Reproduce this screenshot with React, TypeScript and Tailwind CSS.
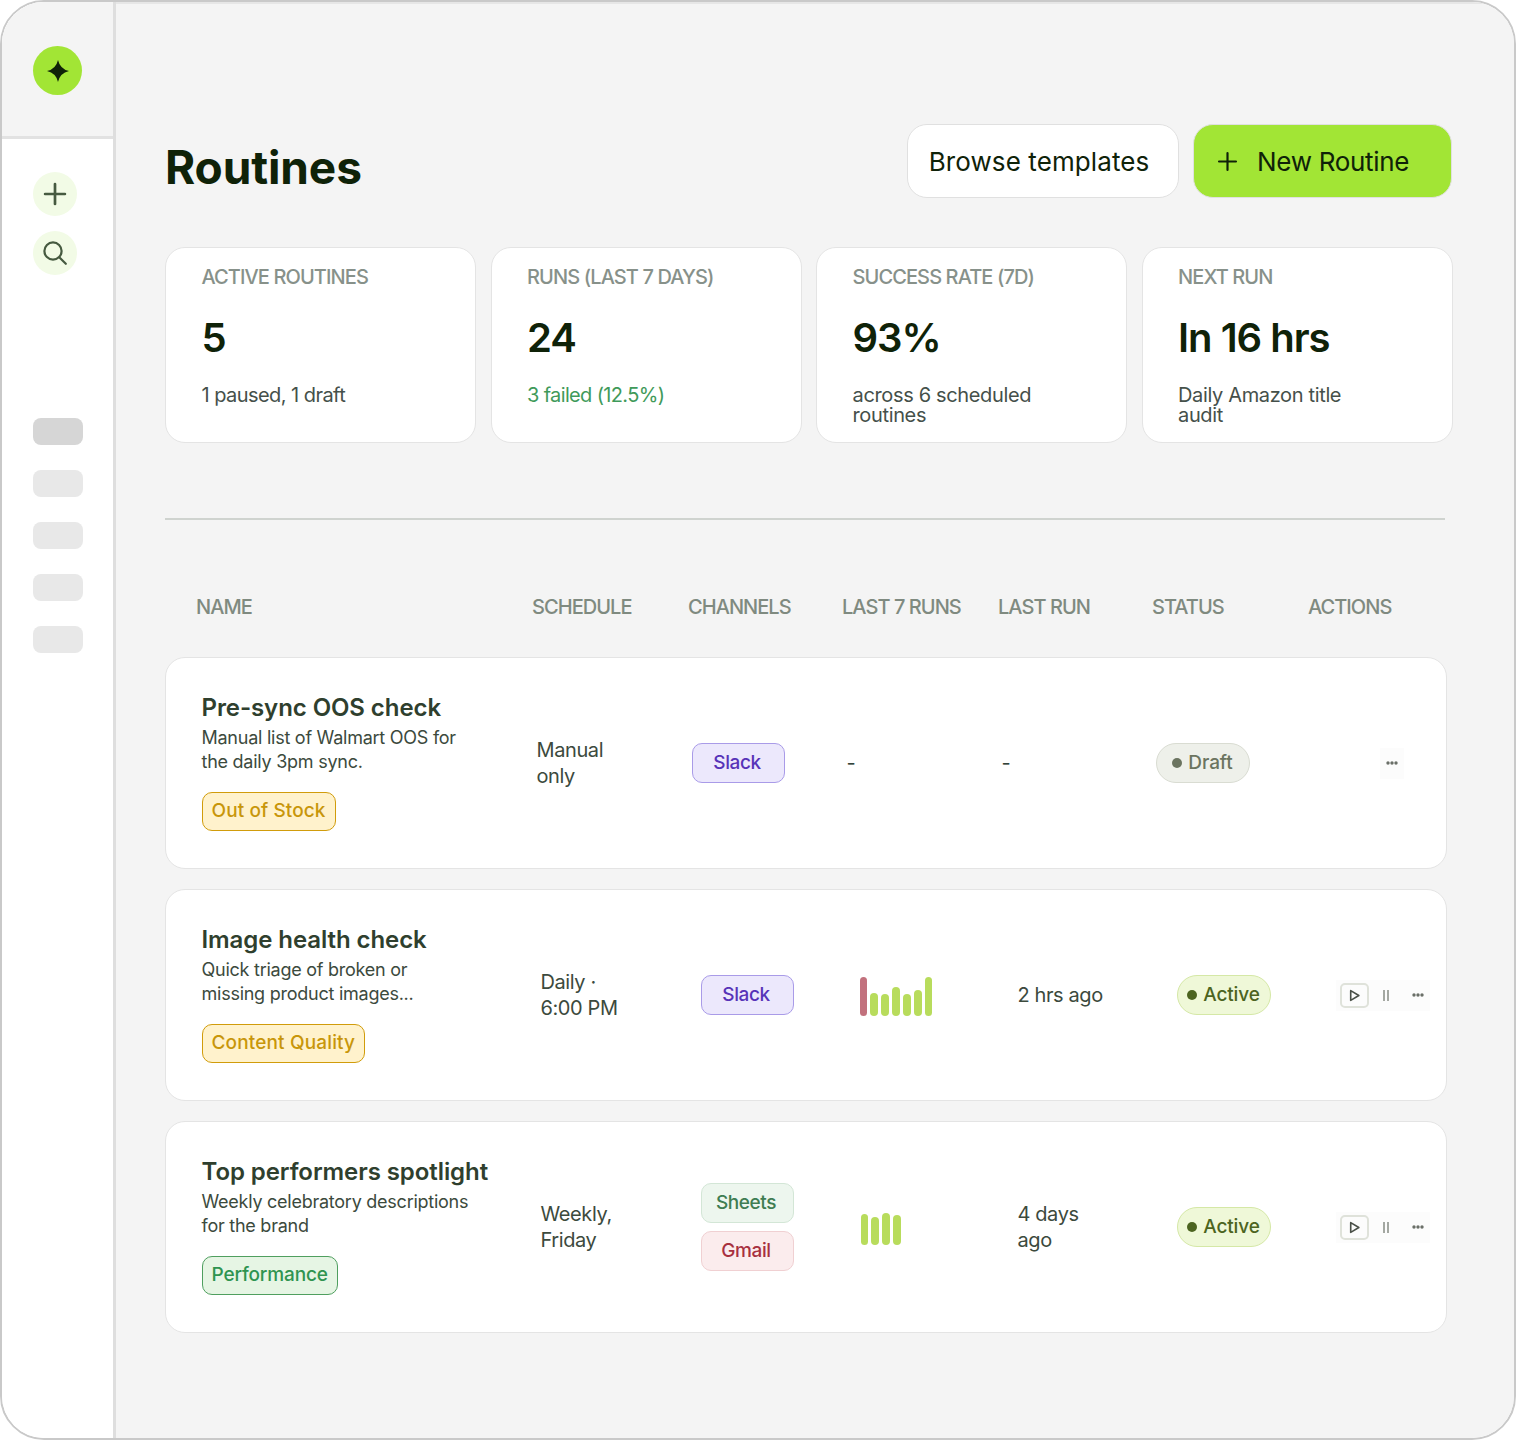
import { Plus } from 'lucide-react';

const FONT = "font-['Inter','Noto_Sans',sans-serif]";

const stats = [
  { label: 'ACTIVE ROUTINES', value: '5', sub: '1 paused, 1 draft', subClass: 'tracking-[-0.55px] text-[#45504a]' },
  { label: 'RUNS (LAST 7 DAYS)', value: '24', sub: '3 failed (12.5%)', subClass: 'tracking-[-0.65px] text-[#3f9a5a]' },
  { label: 'SUCCESS RATE (7D)', value: '93%', sub: 'across 6 scheduled routines', subClass: 'tracking-[-0.35px] text-[#45504a]' },
  { label: 'NEXT RUN', value: 'In 16 hrs', sub: 'Daily Amazon title audit', subClass: 'tracking-[-0.35px] text-[#45504a]' },
];

const headers = [
  { label: 'NAME', w: 'w-[336px]' },
  { label: 'SCHEDULE', w: 'w-[156px]' },
  { label: 'CHANNELS', w: 'w-[154px]' },
  { label: 'LAST 7 RUNS', w: 'w-[156px]' },
  { label: 'LAST RUN', w: 'w-[154px]' },
  { label: 'STATUS', w: 'w-[156px]' },
  { label: 'ACTIONS', w: 'w-[100px]' },
];

function Chip({ label, className }: { label: string; className: string }) {
  return (
    <span className={`flex h-10 w-[93px] items-center justify-center rounded-[10px] border pr-[2px] text-[19px] font-medium tracking-[-0.4px] ${className}`}>
      {label}
    </span>
  );
}

function StatusPill({ label, active }: { label: string; active: boolean }) {
  return (
    <span
      className={`flex h-10 w-[94px] items-center justify-center gap-[6px] rounded-full border text-[19px] font-medium tracking-[-0.1px] ${
        active ? 'border-[#d5e8a6] bg-[#eff8d8] text-[#4c6420]' : 'border-[#d9dcd2] bg-[#eef0ea] text-[#6b7460]'
      }`}
    >
      <span className={`size-[10px] rounded-full ${active ? 'bg-[#4c6420]' : 'bg-[#6b7460]'}`} />
      {label}
    </span>
  );
}

function Dots() {
  return (
    <svg width="12" height="4" viewBox="0 0 12 4" fill="#6a6f68">
      <circle cx="2" cy="2" r="1.7" />
      <circle cx="6" cy="2" r="1.7" />
      <circle cx="10" cy="2" r="1.7" />
    </svg>
  );
}

function Actions() {
  return (
    <div className="flex h-[31px] w-[94px] items-center bg-[#fcfcfc] pl-1">
      <span className="flex h-[25px] w-[29px] items-center justify-center rounded-[5px] border-2 border-[#dfe2da]">
        <svg width="13" height="13" viewBox="0 0 12 12" fill="none" stroke="#4a5048" strokeWidth="1.5" strokeLinejoin="round">
          <path d="M2.5 1.5 10 6l-7.5 4.500z" />
        </svg>
      </span>
      <span className="ml-[14px] flex w-[6px] justify-between">
        <span className="h-[11px] w-[2px] bg-[#a4a8a2]" />
        <span className="h-[11px] w-[2px] bg-[#a4a8a2]" />
      </span>
      <span className="ml-[23px] flex"><Dots /></span>
    </div>
  );
}

function Bars({ values, failedFirst, className }: { values: number[]; failedFirst?: boolean; className: string }) {
  return (
    <div className={`flex items-end gap-[3.3px] ${className}`}>
      {values.map((h, i) => (
        <span
          key={i}
          className={`w-[7.6px] rounded-full ${failedFirst && i === 0 ? 'bg-[#c2717d]' : 'bg-[#b8dc5c]'}`}
          style={{ height: h }}
        />
      ))}
    </div>
  );
}

function RoutineRow({
  title,
  desc,
  tag,
  tagClass,
  schedule,
  cols,
  children,
}: {
  title: string;
  desc: string;
  tag: string;
  tagClass: string;
  schedule: string;
  cols: string;
  children: React.ReactNode;
}) {
  return (
    <div className={`grid h-[212px] items-center rounded-[20px] border-[1.5px] border-[#e4e4e4] bg-white pl-[35.5px] text-[#33433a] ${cols}`}>
      <div className="mb-[2px]">
        <div className="text-[24px] leading-[30px] font-semibold tracking-[-0.08px] text-[#2f3f2e]">{title}</div>
        <div className="mt-[3px] w-[268px] text-[18px] leading-[24px] tracking-[-0.25px] text-[#3c4a3d]">{desc}</div>
        <span className={`mt-[18px] inline-flex h-[39px] items-center rounded-[10px] border px-[9px] text-[19px] font-medium ${tagClass}`}>
          {tag}
        </span>
      </div>
      <div className="w-[90px] text-[20px] leading-[26px] tracking-[-0.4px] text-[#3c4a3d]">{schedule}</div>
      {children}
    </div>
  );
}

export default function App() {
  return (
    <div className={`${FONT} h-[1440px] w-[1516px] bg-white`}>
      <div className="flex h-full overflow-hidden rounded-[44px] border-2 border-[#c9c9c9]">
        <aside className="flex w-[114px] shrink-0 flex-col border-r-[3px] border-[#dedede] bg-white">
          <div className="flex h-[137px] shrink-0 border-b-[3px] border-[#e2e2e2] bg-[#f4f4f4] pt-[44px] pl-[31px]">
            <div className="flex size-[49px] items-center justify-center rounded-full bg-[#a2e535]">
              <svg width="22" height="22" viewBox="0 0 22 22" fill="#0f2208">
                <path d="M11 0Q13 9 22 11 13 13 11 22 9 13 0 11 9 9 11 0z" />
              </svg>
            </div>
          </div>
          <div className="flex flex-col gap-[15px] pt-[33px] pl-[31px]">
            <div className="flex size-[44px] items-center justify-center rounded-full bg-[#f2fbe6] text-[#465a40]">
              <Plus size={34} strokeWidth={1.9} />
            </div>
            <div className="flex size-[44px] items-center justify-center rounded-full bg-[#f2fbe6] text-[#465a40]">
              <svg width="24" height="24" viewBox="0 0 24 24" fill="none" stroke="currentColor" strokeWidth="2.2" strokeLinecap="round">
                <circle cx="10" cy="10" r="8.600" />
                <path d="M16.500 16.500 22.800 22.800" />
              </svg>
            </div>
          </div>
          <div className="flex flex-col gap-[25px] pt-[143px] pl-[31px]">
            <div className="h-[27px] w-[50px] rounded-[8px] bg-[#d6d6d6]" />
            <div className="h-[27px] w-[50px] rounded-[8px] bg-[#e8e8e8]" />
            <div className="h-[27px] w-[50px] rounded-[8px] bg-[#e8e8e8]" />
            <div className="h-[27px] w-[50px] rounded-[8px] bg-[#e8e8e8]" />
            <div className="h-[27px] w-[50px] rounded-[8px] bg-[#e8e8e8]" />
          </div>
        </aside>

        <main className="min-w-0 flex-1 border-t-2 border-[#e6e6e6] bg-[#f4f4f4] pt-[120px] pl-[49px]">
          <header className="flex h-[74px] w-[1287px] items-center justify-between">
            <h1 className="mt-[12px] text-[46px] font-bold tracking-[-0.1px] text-[#0f2208]">Routines</h1>
            <div className="flex gap-[14px]">
              <button className="h-[74px] w-[272px] rounded-[20px] border-[1.5px] border-[#e0e0e0] bg-white pr-[8px] text-[26px] tracking-[0.1px] text-[#0f2208]">
                Browse templates
              </button>
              <button className="flex h-[74px] w-[259px] items-center rounded-[20px] border-[1.5px] border-[#e0e0e0] bg-[#a2e535] pl-[19px] text-[26px] tracking-[-0.3px] text-[#0f2208]">
                <Plus size={29} strokeWidth={1.8} />
                <span className="ml-[15px]">New Routine</span>
              </button>
            </div>
          </header>

          <section className="mt-[49px] grid w-[1287.5px] grid-cols-4 gap-[14.5px]">
            {stats.map((s) => (
              <div key={s.label} className="h-[196px] rounded-[20px] border-[1.5px] border-[#e4e4e4] bg-white pt-[16px] pl-[35.5px]">
                <div className="text-[20px] leading-[26px] font-medium tracking-[-0.9px] text-[#87918a]">{s.label}</div>
                <div className="mt-[23px] text-[40px] leading-[50px] font-semibold tracking-[-1px] text-[#0f2208]">{s.value}</div>
                <div className={`mt-[22px] w-[200px] text-[20px] leading-[20px] ${s.subClass}`}>{s.sub}</div>
              </div>
            ))}
          </section>

          <div className="mt-[75px] h-[2px] w-[1280px] bg-[#cfd3cf]" />

          <div className="flex h-[137px] w-[1280px] items-center pt-[36px] pl-[31px] text-[20px] font-medium tracking-[-0.95px] text-[#7f8a80]">
            {headers.map((h) => (
              <div key={h.label} className={`shrink-0 ${h.w}`}>{h.label}</div>
            ))}
          </div>

          <div className="flex w-[1282px] flex-col gap-[20px]">
            <RoutineRow
              title="Pre-sync OOS check"
              desc="Manual list of Walmart OOS for the daily 3pm sync."
              tag="Out of Stock"
              tagClass="tracking-[0.1px] border-[#d19c0b] bg-[#fff2cc] text-[#c8960a]"
              schedule="Manual only"
              cols="grid-cols-[335px_155px_155px_155px_154px_154px_1fr]"
            >
              <Chip label="Slack" className="border-[#a99be8] bg-[#ece8fc] text-[#5733b8]" />
              <div className="text-[20px]">-</div>
              <div className="text-[20px]">-</div>
              <StatusPill label="Draft" active={false} />
              <div className="ml-[70px] flex h-[31px] w-[24px] items-center justify-center bg-[#fcfcfc]"><Dots /></div>
            </RoutineRow>

            <RoutineRow
              title="Image health check"
              desc="Quick triage of broken or missing product images..."
              tag="Content Quality"
              tagClass="tracking-[0.15px] border-[#d19c0b] bg-[#fff2cc] text-[#c8960a]"
              schedule="Daily · 6:00 PM"
              cols="grid-cols-[339px_160px_159px_158px_159px_159px_1fr]"
            >
              <Chip label="Slack" className="border-[#a99be8] bg-[#ece8fc] text-[#5733b8]" />
              <Bars values={[39, 23, 22, 29, 22, 26, 39]} failedFirst className="mt-[3px]" />
              <div className="text-[20px] leading-[26px] tracking-[-0.4px] text-[#3c4a3d]">2 hrs ago</div>
              <StatusPill label="Active" active />
              <Actions />
            </RoutineRow>

            <RoutineRow
              title="Top performers spotlight"
              desc="Weekly celebratory descriptions for the brand"
              tag="Performance"
              tagClass="tracking-[-0.15px] border-[#4f9f5f] bg-[#e6f5e4] text-[#2f9450]"
              schedule="Weekly, Friday"
              cols="grid-cols-[339px_160px_159px_158px_159px_159px_1fr]"
            >
              <div className="flex w-[93px] flex-col gap-2">
                <Chip label="Sheets" className="border-[#d3e6d6] bg-[#edf6ee] text-[#3f7d52]" />
                <Chip label="Gmail" className="border-[#f0d0d2] bg-[#fbeced] text-[#a8303f]" />
              </div>
              <Bars values={[31, 28, 32, 30]} className="mt-[3px] ml-[1px]" />
              <div className="w-[80px] text-[20px] leading-[26px] tracking-[-0.4px] text-[#3c4a3d]">4 days ago</div>
              <StatusPill label="Active" active />
              <Actions />
            </RoutineRow>
          </div>
        </main>
      </div>
    </div>
  );
}
